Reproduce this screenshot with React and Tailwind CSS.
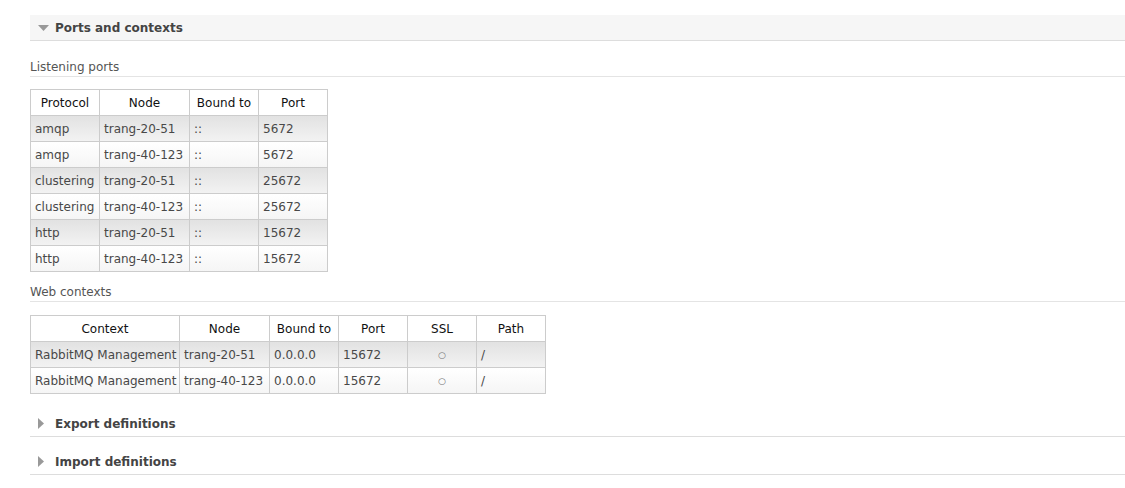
const listening = [
  ['amqp', 'trang-20-51', '::', '5672'],
  ['amqp', 'trang-40-123', '::', '5672'],
  ['clustering', 'trang-20-51', '::', '25672'],
  ['clustering', 'trang-40-123', '::', '25672'],
  ['http', 'trang-20-51', '::', '15672'],
  ['http', 'trang-40-123', '::', '15672'],
];

const contexts = [
  ['RabbitMQ Management', 'trang-20-51', '0.0.0.0', '15672', '○', '/'],
  ['RabbitMQ Management', 'trang-40-123', '0.0.0.0', '15672', '○', '/'],
];

function SectionHeader({ title, open }) {
  return (
    <div
      className={`flex items-center h-[26px] border-b border-[#dddddd] ${
        open ? 'bg-[#f6f6f6]' : 'bg-white'
      }`}
    >
      <span className="w-[25px] flex justify-center pl-[2px]">
        {open ? (
          <svg width="11" height="6" viewBox="0 0 11 6">
            <path d="M0 0 L11 0 L5.5 6 Z" fill="#999999" />
          </svg>
        ) : (
          <svg width="6" height="11" viewBox="0 0 6 11" className="ml-[-6px]">
            <path d="M0 0 L6 5.5 L0 11 Z" fill="#999999" />
          </svg>
        )}
      </span>
      <span className="text-[12px] font-bold text-[#444444]">{title}</span>
    </div>
  );
}

function SubHeading({ children }) {
  return (
    <div className="text-[12px] text-[#555555] leading-[15px] pb-[1px] border-b border-[#e4e4e4]">
      {children}
    </div>
  );
}

function DataTable({ headers, widths, rows, centerCols = [] }) {
  return (
    <table className="border-collapse table-fixed text-[12px] leading-[15px]" style={{ width: widths.reduce((a, b) => a + b, 0) }}>
      <colgroup>
        {widths.map((w, i) => (
          <col key={i} style={{ width: w }} />
        ))}
      </colgroup>
      <thead>
        <tr className="bg-white">
          {headers.map((h) => (
            <th
              key={h}
              className="border border-[#cccccc] px-1 pt-[6px] pb-[4px] font-normal text-center text-[#111111] whitespace-nowrap"
            >
              {h}
            </th>
          ))}
        </tr>
      </thead>
      <tbody>
        {rows.map((row, i) => (
          <tr
            key={i}
            className={
              i % 2 === 0
                ? 'bg-linear-to-b from-[#e2e2e2] to-[#f3f3f3]'
                : 'bg-linear-to-b from-[#ffffff] to-[#f5f5f5]'
            }
          >
            {row.map((c, j) => (
              <td
                key={j}
                className={`border border-[#cccccc] px-1 pt-[6px] pb-[4px] text-[#484848] whitespace-nowrap ${
                  centerCols.includes(j) ? 'text-center text-[9px] text-[#777777]' : 'text-left'
                }`}
              >
                {c}
              </td>
            ))}
          </tr>
        ))}
      </tbody>
    </table>
  );
}

export default function App() {
  return (
    <div className="bg-white min-h-[488px] pl-[30px] pt-[15px] font-['DejaVu_Sans',sans-serif]">
      {/* Ports and contexts */}
      <SectionHeader title="Ports and contexts" open />

      <div className="mt-[19px]">
        <SubHeading>Listening ports</SubHeading>
      </div>
      <div className="mt-[12px]">
        <DataTable
          headers={['Protocol', 'Node', 'Bound to', 'Port']}
          widths={[69, 90, 69, 69]}
          rows={listening}
        />
      </div>

      <div className="mt-[13px]">
        <SubHeading>Web contexts</SubHeading>
      </div>
      <div className="mt-[13px]">
        <DataTable
          headers={['Context', 'Node', 'Bound to', 'Port', 'SSL', 'Path']}
          widths={[149, 90, 69, 69, 69, 69]}
          rows={contexts}
          centerCols={[4]}
        />
      </div>

      <div className="mt-[17px]">
        <SectionHeader title="Export definitions" />
      </div>
      <div className="mt-[12px]">
        <SectionHeader title="Import definitions" />
      </div>
    </div>
  );
}
